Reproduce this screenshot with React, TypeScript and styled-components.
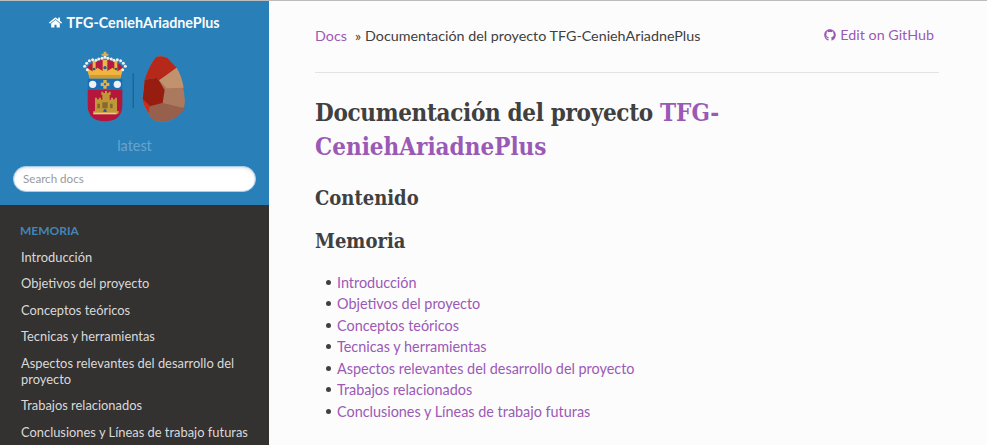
import React from "react";
import styled, { createGlobalStyle } from "styled-components";
import { FaHome, FaGithub } from "react-icons/fa";

const GlobalStyle = createGlobalStyle`
  html, body {
    margin: 0;
    padding: 0;
    height: 445px;
    overflow: hidden;
    background: #fcfcfc;
    font-family: Lato, "Liberation Sans", sans-serif;
    color: #404040;
  }
  * { box-sizing: border-box; }
`;

const menuItems = [
  "Introducción",
  "Objetivos del proyecto",
  "Conceptos teóricos",
  "Tecnicas y herramientas",
  "Aspectos relevantes del desarrollo del proyecto",
  "Trabajos relacionados",
  "Conclusiones y Líneas de trabajo futuras",
];

// pearls along the arch of the crown
const pearls = [
  [44, 64], [50, 55], [58, 47], [68, 44], [78, 46], [86, 42], [96, 40], [105, 37],
  [114, 40], [124, 42], [132, 46], [142, 44], [152, 47], [160, 55], [166, 64],
  [52, 74], [158, 74],
];

function Logo() {
  return (
    <svg width="130" height="85" viewBox="0 0 390 255">
      {/* crown */}
      <path d="M101 20h8v6h6v6h-6v8h-8v-8h-6v-6h6z" fill="#d9ae5a" />
      <path d="M50 70 Q62 46 105 44 Q148 46 160 70 L150 82 H60 Z" fill="#b41b40" />
      <path d="M98 44h14v40H98z M68 48h9v34h-9z M133 48h9v34h-9z" fill="#e8b84e" />
      <path
        d="M50 68 L70 80 L82 68 L105 82 L128 68 L140 80 L160 68 L151 100 H59 Z"
        fill="#efb53f"
      />
      <path d="M59 90h92v10H59z" fill="#d09a30" />
      <circle cx="105" cy="68" r="5" fill="#27609c" />
      <circle cx="72" cy="72" r="4" fill="#1f6f5c" />
      <circle cx="138" cy="72" r="4" fill="#1f6f5c" />
      {pearls.map(([cx, cy]) => (
        <circle key={`${cx}-${cy}`} cx={cx} cy={cy} r="4.5" fill="#f4f0e4" />
      ))}
      {/* shield */}
      <path d="M53 134 H157 V180 Q157 228 105 229 Q53 228 53 180 Z" fill="#b5173c" />
      <path d="M53 102 H157 V134 H53 Z" fill="#1b6db5" />
      <circle cx="68" cy="118" r="11" fill="#eef1f4" />
      <circle cx="142" cy="118" r="11" fill="#eef1f4" />
      <path d="M100 105h10v8h8v10h-8v8h-10v-8h-8v-10h8z" fill="#e2b346" />
      <path d="M102 115h6v6h-6z" fill="#2a6aa8" />
      {/* castle */}
      <path
        d="M75 158h6v5h6v-5h6v6h4v-14h-3v-10h6v4h5v-6h6v6h5v-4h6v10h-3v14h4v-6h6v5h6v-5h6v40h5v8H70v-8h5z"
        fill="#bf9638"
      />
      <path d="M97 172h16v18H97z M82 176h8v14h-8z M120 176h8v14h-8z" fill="#86692d" />
      <path d="M100 198q5-14 10 0v3h-10z" fill="#2d5f91" />
      <path d="M70 203h70v5H70z" fill="#e6cf8a" />
      {/* divider */}
      <path d="M188 85h3v105h-3z" fill="#1c5a85" />
      {/* rock */}
      <path
        d="M258 36 Q275 30 292 38 L320 68 Q340 105 345 170 Q345 195 310 222 Q280 234 262 229 Q240 222 236 204 Q218 180 218 160 Q220 85 258 36 Z"
        fill="#ab7a5e"
      />
      <path d="M258 36 Q275 30 292 38 L320 68 L268 106 L262 98 L224 104 Q238 60 258 36 Z" fill="#b6281a" />
      <path d="M320 68 Q336 95 341 128 L290 130 L268 106 Z" fill="#c2926e" />
      <path d="M240 184 L278 174 L345 190 Q335 208 310 222 Q280 234 262 229 Q240 222 236 204 Z" fill="#96604c" />
      <path d="M218 160 L240 184 L236 204 Q218 180 218 160 Z" fill="#cc2c1a" />
      <path d="M224 104 L262 98 L284 135 L278 174 L240 184 L218 162 Z" fill="#981d11" />
    </svg>
  );
}

export default function App() {
  return (
    <>
      <GlobalStyle />
      <Page>
        <Sidebar>
          <SearchPanel>
            <ProjectLink>
              <FaHome size={13} />
              TFG-CeniehAriadnePlus
            </ProjectLink>
            <LogoBox>
              <Logo />
            </LogoBox>
            <Version>latest</Version>
            <SearchInput placeholder="Search docs" readOnly />
          </SearchPanel>
          <Menu>
            <Caption>Memoria</Caption>
            {menuItems.map((item) => (
              <MenuItem key={item}>{item}</MenuItem>
            ))}
          </Menu>
        </Sidebar>
        <Main>
          <Breadcrumbs>
            <Crumbs>
              <PurpleLink>Docs</PurpleLink>
              <CrumbSep>»</CrumbSep>
              Documentación del proyecto TFG-CeniehAriadnePlus
            </Crumbs>
            <EditLink>
              <FaGithub size={12} />
              Edit on GitHub
            </EditLink>
          </Breadcrumbs>
          <Rule />
          <Title>
            Documentación del proyecto <PurpleLink>TFG-CeniehAriadnePlus</PurpleLink>
          </Title>
          <Heading>Contenido</Heading>
          <Heading>Memoria</Heading>
          <DocList>
            {menuItems.map((item) => (
              <li key={item}>
                <PurpleLink>{item}</PurpleLink>
              </li>
            ))}
          </DocList>
        </Main>
      </Page>
    </>
  );
}

const Page = styled.div`
  display: flex;
  height: 445px;
  border-top: 1px solid #bdbdbd;
  overflow: hidden;
`;

const Sidebar = styled.nav`
  flex: 0 0 269px;
  background: #343131;
  color: #d9d9d9;
  overflow: hidden;
`;

const SearchPanel = styled.div`
  display: flex;
  flex-direction: column;
  align-items: center;
  height: 204px;
  padding: 12px 13px 0;
  background: #2980b9;
`;

const ProjectLink = styled.a`
  display: flex;
  align-items: center;
  gap: 4px;
  height: 18px;
  font-size: 14.3px;
  font-weight: 700;
  color: #fcfcfc;
`;

const LogoBox = styled.div`
  display: flex;
  margin-top: 14px;
  height: 85px;
`;

const Version = styled.div`
  margin-top: 6px;
  font-size: 14.4px;
  line-height: 20px;
  color: rgba(255, 255, 255, 0.3);
`;

const SearchInput = styled.input`
  width: 100%;
  height: 26px;
  margin-top: 10px;
  padding: 0 9px 2px;
  border: 1px solid #a9cde6;
  border-radius: 50px;
  background: #fff;
  outline: none;
  font-family: Lato, "Liberation Sans", sans-serif;
  font-size: 11.6px;
  box-shadow: inset 0 1px 3px #ddd;

  &::placeholder {
    color: #999;
  }
`;

const Menu = styled.div`
  padding-top: 15px;
`;

const Caption = styled.div`
  padding: 0 20px;
  height: 22px;
  margin-bottom: 1.6px;
  line-height: 22px;
  font-size: 12px;
  font-weight: 700;
  text-transform: uppercase;
  color: #4286b5;
`;

const MenuItem = styled.a`
  display: block;
  padding: 5.25px 15px 5.25px 21px;
  font-size: 12.9px;
  line-height: 16px;
  color: #d9d9d9;
`;

const Main = styled.main`
  flex: 1;
  min-width: 0;
  padding: 23px 48px 0 46px;
  background: #fcfcfc;
`;

const Breadcrumbs = styled.div`
  display: flex;
  justify-content: space-between;
  padding-right: 5px;
  font-size: 14.3px;
  line-height: 22px;
`;

const Crumbs = styled.div`
  color: #404040;
  margin-top: 1px;
`;

const CrumbSep = styled.span`
  margin: 0 4px 0 8px;
`;

const PurpleLink = styled.a`
  color: #9b59b6;
`;

const EditLink = styled.a`
  display: flex;
  align-items: center;
  gap: 4px;
  height: 22px;
  color: #9b59b6;
`;

const Rule = styled.hr`
  margin: 25px 0 0;
  border: 0;
  border-top: 1px solid #e1e4e5;
`;

const Title = styled.h1`
  width: 440px;
  margin: 23px 0 0;
  font-family: "DejaVu Serif", serif;
  font-stretch: condensed;
  font-size: 24px;
  line-height: 34px;
  font-weight: 700;
  letter-spacing: -0.33px;
  color: #404040;

  a {
    letter-spacing: 0;
  }
`;

const Heading = styled.h2`
  margin: 22px 0 0;
  font-family: "DejaVu Serif", serif;
  font-stretch: condensed;
  font-size: 20px;
  line-height: 24px;
  font-weight: 700;
  color: #404040;

  & + & {
    margin-top: 19px;
  }
`;

const DocList = styled.ul`
  margin: 18.6px 0 0;
  padding: 0 0 0 11px;
  list-style: none;
  font-size: 14.4px;
  line-height: 21.5px;

  li {
    display: flex;
    align-items: center;
  }

  li::before {
    content: "";
    flex: 0 0 5px;
    height: 5px;
    margin-right: 6px;
    border-radius: 50%;
    background: #404040;
  }
`;
